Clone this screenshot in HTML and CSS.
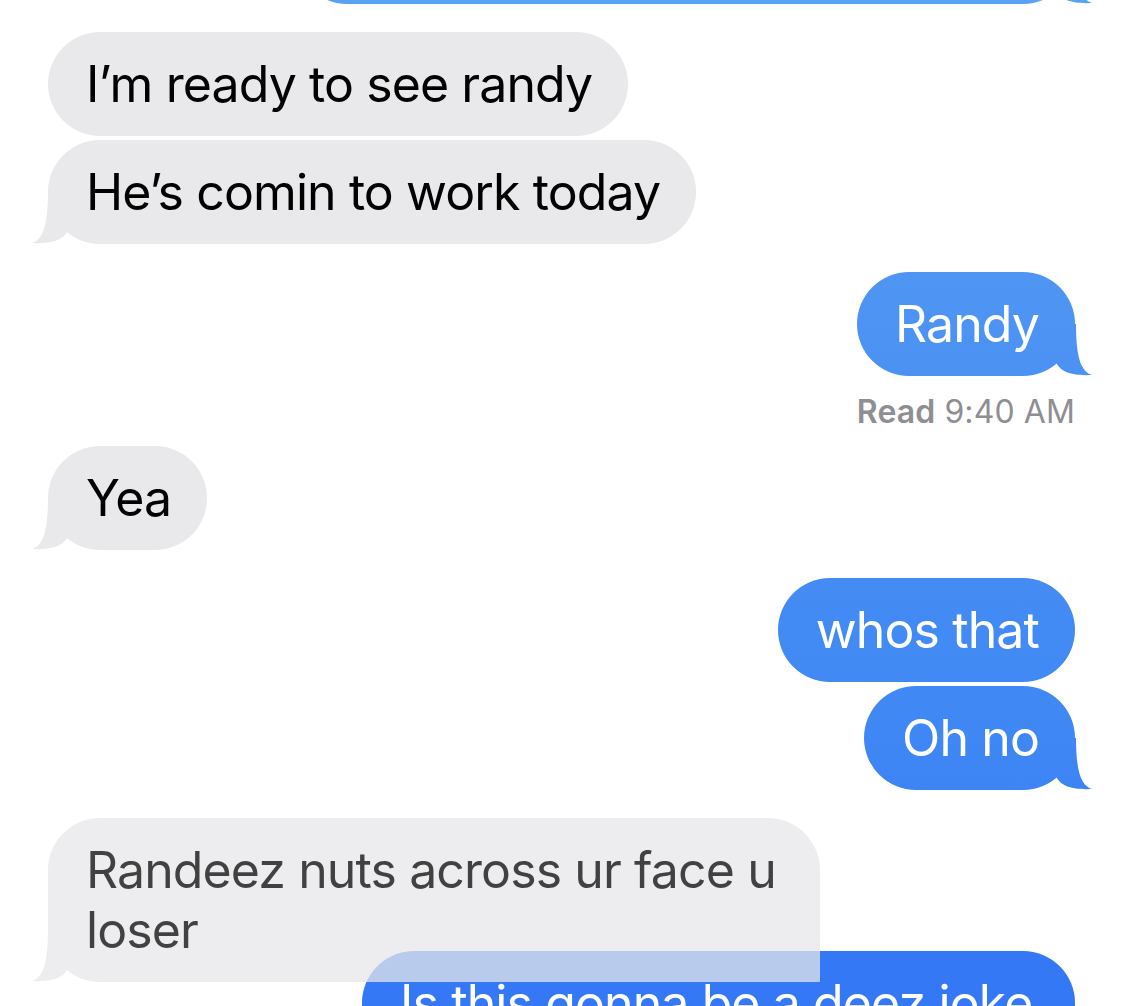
FILE: index.html
```html
<!DOCTYPE html>
<html lang="en">
<head>
<meta charset="utf-8">
<title>Messages</title>
<link rel="stylesheet" href="styles.css">
</head>
<body>
<main class="thread">
  <div class="bubble me tail partial" aria-hidden="true">&nbsp;</div>

  <div class="bubble them first">I’m ready to see randy</div>
  <div class="bubble them tail stacked">He’s comin to work today</div>

  <div class="bubble me tail first">Randy</div>
  <div class="receipt"><b>Read</b> 9:40 AM</div>

  <div class="bubble them tail yea">Yea</div>

  <div class="bubble me first">whos that</div>
  <div class="bubble me tail stacked">Oh no</div>

  <div class="bubble them tail first faded">Randeez nuts across ur face u<br>loser</div>
  <div class="bubble me under">Is this gonna be a deez joke</div>
</main>
</body>
</html>
```

FILE: styles.css
```css
html, body {
  margin: 0;
  padding: 0;
  background: #ffffff;
  overflow: hidden;
}

body {
  width: 1125px;
  height: 1006px;
  font-family: "Inter", "Liberation Sans", sans-serif;
}

.thread {
  display: flex;
  flex-direction: column;
  padding: 0 50px 0 48px;
}

.bubble {
  position: relative;
  z-index: 0;
  box-sizing: border-box;
  max-width: 780px;
  padding: 22px 36px 22px 38px;
  border-radius: 52px;
  font-size: 50px;
  line-height: 60px;
  letter-spacing: -0.9px;
  white-space: nowrap;
}

.them {
  align-self: flex-start;
  background: #e9e9eb;
  color: #000000;
}

.me {
  align-self: flex-end;
  color: #ffffff;
  background: linear-gradient(180deg, #5aa2f3 0px, #4c93f3 330px, #3f87f4 740px, #3277f6 1006px);
  background-attachment: fixed;
}

.tail::after {
  content: "";
  position: absolute;
  z-index: -1;
  bottom: 0;
  width: 60px;
  height: 60px;
  background: inherit;
}

.them.tail::after {
  left: -16px;
  clip-path: path("M0 59 C10 56 16 44 16 8 L50 8 L35 48 C31 55 22 60 0 59 Z");
}

.me.tail::after {
  right: -17px;
  width: 61px;
  clip-path: path("M61 59 C51 56 45 44 45 8 L11 8 L26 48 C30 55 39 60 61 59 Z");
}

.partial {
  width: 790px;
  height: 104px;
  margin-top: -100px;
}

.first {
  margin-top: 28px;
}

.stacked {
  margin-top: 4px;
}

.receipt {
  align-self: flex-end;
  margin-top: 16px;
  font-size: 32px;
  line-height: 40px;
  color: #8e8e93;
  letter-spacing: 0.1px;
}

.receipt b {
  font-weight: 600;
}

.yea {
  margin-top: 14px;
}

.faded {
  z-index: 2;
  width: 772px;
  white-space: normal;
  background: #e8e8eb;
  color: #000000;
  opacity: 0.74;
  border-bottom-right-radius: 0;
}

.under {
  z-index: 1;
  width: 713px;
  margin-top: -31px;
  height: 120px;
  background: #3478f6;
}
```
